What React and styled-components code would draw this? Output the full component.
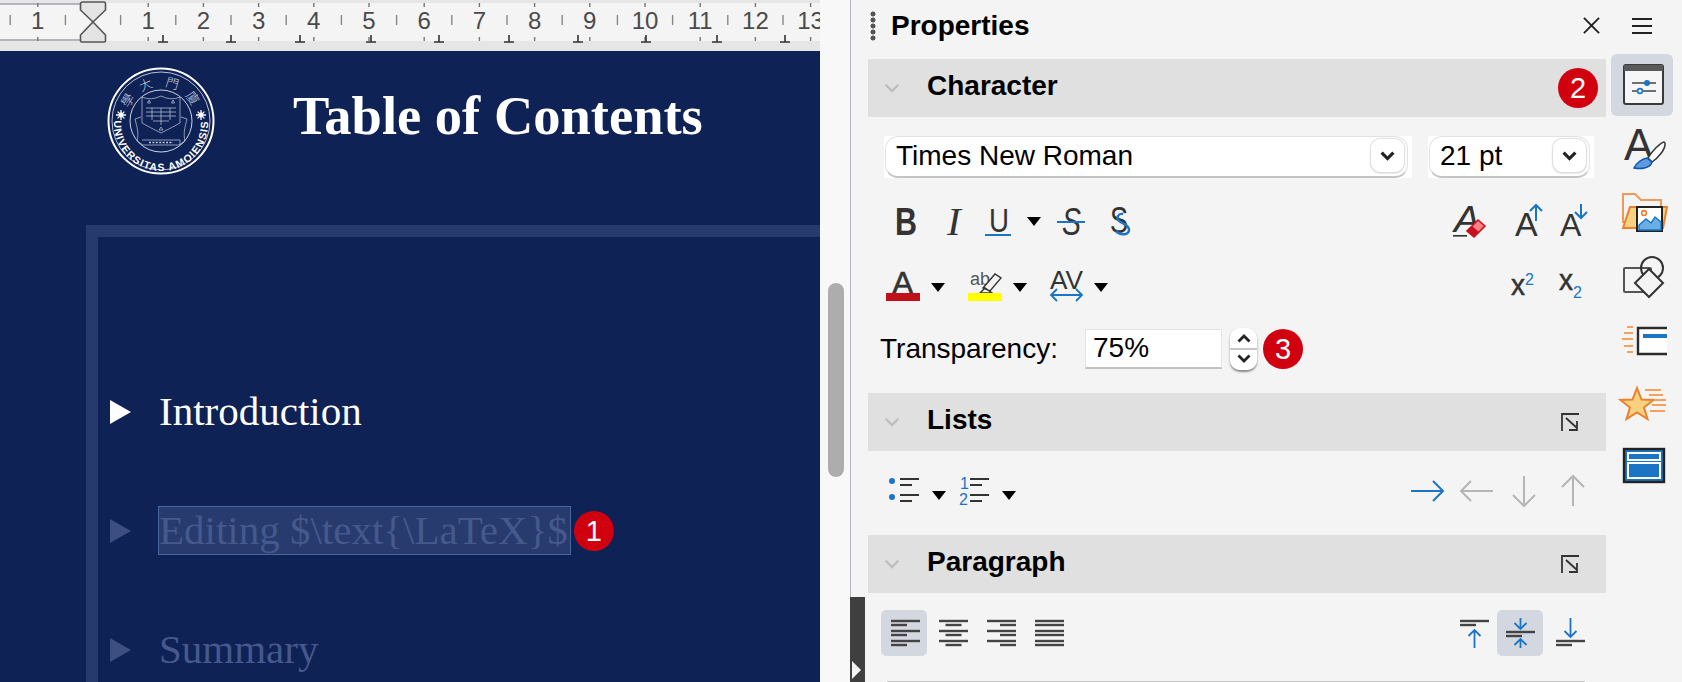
import React from "react";
import styled, { createGlobalStyle } from "styled-components";

const BLUE = "#1b75c4";
const DARK = "#333";
const ORANGE = "#ee7f2d";
const SANS = '"Liberation Sans", Arial, sans-serif';

const GlobalStyle = createGlobalStyle`
  html, body {
    margin: 0;
    padding: 0;
    overflow: hidden;
    background: #f4f4f4;
  }
  * {
    box-sizing: border-box;
  }
`;

const Page = styled.div`
  display: flex;
  width: 1682px;
  height: 682px;
  overflow: hidden;
  font-family: ${SANS};
  color: #000;
`;

/* left side: ruler, slide, scrollbar */
const Editor = styled.div`
  position: relative;
  display: flex;
  width: 851px;
  flex: none;
`;

const Workspace = styled.div`
  display: flex;
  flex-direction: column;
  width: 820px;
`;

const RulerBar = styled.div`
  height: 51px;
  flex: none;
  background: #f4f4f4;
  border-top: 3px solid #e6e6e6;
  border-bottom: 10px solid #e6e6e6;
  svg {
    display: block;
    margin-top: -3px;
  }
`;

const Slide = styled.div`
  flex: 1;
  overflow: hidden;
  background: #0f2255;
  font-family: "Liberation Serif", "Times New Roman", serif;
`;

const SlideHead = styled.div`
  display: flex;
  align-items: flex-start;
  height: 174px;
  padding: 16px 0 0 107px;
`;

const Title = styled.h1`
  margin: 18px 0 0 78px;
  font-size: 54.5px;
  line-height: 62px;
  font-weight: 700;
  color: #fff;
  white-space: nowrap;
`;

const Frame = styled.div`
  margin-left: 86px;
  height: 470px;
  padding: 150px 0 0 12px;
  border-left: 12px solid #273a6e;
  border-top: 12px solid #273a6e;
  display: flex;
  flex-direction: column;
  gap: 70px;
`;

const Bullet = styled.div`
  display: flex;
  align-items: center;
  height: 49px;
  color: ${(p) => (p.$dim ? "#45598c" : "#fff")};
`;

const Arrowhead = styled.span`
  width: 0;
  height: 0;
  flex: none;
  margin-right: 27px;
  border-left: 21px solid ${(p) => (p.$dim ? "#3d4f80" : "#fff")};
  border-top: 12.5px solid transparent;
  border-bottom: 12.5px solid transparent;
`;

const BulletText = styled.span`
  display: block;
  height: 49px;
  padding: 0 2px 0 0;
  border: 1px solid ${(p) => (p.$selected ? "#4a669e" : "transparent")};
  background: ${(p) => (p.$selected ? "#283b6e" : "transparent")};
  font-size: 41px;
  line-height: 47px;
  white-space: nowrap;
`;

const Badge = styled.span`
  width: 40px;
  height: 40px;
  flex: none;
  border-radius: 50%;
  background: #d0000f;
  color: #fff;
  font-family: ${SANS};
  font-size: 29px;
  line-height: 40px;
  text-align: center;
  margin-left: ${(p) => p.$ml || 0}px;
`;

const ScrollTrack = styled.div`
  width: 31px;
  flex: none;
  background: #f8f8f8;
  border-right: 1px solid #b6b6be;
  padding: 283px 0 0 8px;
`;

const ScrollThumb = styled.div`
  width: 16px;
  height: 194px;
  border-radius: 8px;
  background: #adadad;
`;

const CollapseHandle = styled.div`
  position: absolute;
  left: 850px;
  top: 597px;
  width: 15px;
  height: 85px;
  background: #3f3f3f;
  &::after {
    content: "";
    position: absolute;
    left: 2px;
    top: 64px;
    border-left: 9px solid #f4f4f4;
    border-top: 9px solid transparent;
    border-bottom: 9px solid transparent;
  }
`;

/* right side: properties deck and tab bar */
const Panel = styled.div`
  display: flex;
  flex: 1;
  background: #f4f4f4;
`;

const Deck = styled.div`
  width: 755px;
  flex: none;
  padding-left: 17px;
  display: flex;
  flex-direction: column;
`;

const DeckTitle = styled.div`
  display: flex;
  align-items: center;
  height: 59px;
  padding: 0 6px 8px 2px;
`;

const Grip = styled.span`
  width: 6px;
  height: 30px;
  margin-right: 15px;
  flex: none;
  background: radial-gradient(circle, #555 0 2.2px, transparent 2.8px) 0 0 / 6px 6px;
`;

const DeckName = styled.span`
  flex: 1;
  font-size: 28px;
  font-weight: 700;
  line-height: 32px;
`;

const SectionHead = styled.div`
  display: flex;
  align-items: center;
  height: 58px;
  flex: none;
  background: #e0e0e0;
  padding: 0 8px 0 16px;
  margin-top: ${(p) => p.$mt || 0}px;
`;

const SectionName = styled.span`
  flex: 1;
  margin-left: 27px;
  font-size: 28px;
  font-weight: 700;
  line-height: 32px;
  padding-bottom: 5px;
`;

const LauncherGap = styled.span`
  width: 18px;
  flex: none;
`;

const Row = styled.div`
  display: flex;
  align-items: center;
  justify-content: ${(p) => (p.$start ? "flex-start" : "space-between")};
  height: ${(p) => p.$h}px;
  margin-top: ${(p) => p.$mt}px;
  padding-left: ${(p) => p.$pl || 0}px;
  padding-right: ${(p) => p.$pr || 0}px;
  flex: none;
`;

const Group = styled.div`
  display: flex;
  align-items: center;
`;

const ComboBacking = styled.div`
  width: ${(p) => p.$w}px;
  height: 42px;
  margin-left: ${(p) => p.$ml || 0}px;
  background: #fff;
  flex: none;
`;

const Combo = styled.div`
  display: flex;
  align-items: center;
  justify-content: space-between;
  height: 42px;
  width: ${(p) => p.$w}px;
  margin-left: 1px;
  padding: 0 3px 2px 10px;
  border-radius: 13px;
  border: 1px solid #e2e2e2;
  border-bottom: 2px solid #c4c4c4;
  font-size: 28px;
  line-height: 32px;
  white-space: nowrap;
`;

const ComboButton = styled.span`
  display: flex;
  align-items: center;
  justify-content: center;
  width: 33px;
  height: 33px;
  flex: none;
  background: #fff;
  border-radius: 9px;
  box-shadow: 0 0 1px 1px #dedede, 0 1px 2px #bbb;
`;

const Caret = styled.span`
  display: block;
  flex: none;
  width: 0;
  height: 0;
  margin-left: ${(p) => p.$ml || 0}px;
  margin-top: ${(p) => p.$mt || 0}px;
  border-top: 9px solid #000;
  border-left: 7px solid transparent;
  border-right: 7px solid transparent;
`;

const Icon = styled.svg`
  display: block;
  flex: none;
  margin-left: ${(p) => p.$ml || 0}px;
  overflow: visible;
  text {
    font-family: ${SANS};
  }
`;

const FieldLabel = styled.span`
  width: 188px;
  font-size: 28px;
  line-height: 32px;
  white-space: nowrap;
`;

const NumberField = styled.div`
  width: 137px;
  height: 40px;
  flex: none;
  padding-left: 7px;
  background: #fff;
  border: 1px solid #e4e4e4;
  border-bottom: 2px solid #c2c2c2;
  font-size: 28px;
  line-height: 35px;
  margin-left: ${(p) => p.$ml || 0}px;
`;

const Spinner = styled.div`
  width: 27px;
  height: 42px;
  flex: none;
  margin-left: 8px;
  display: flex;
  flex-direction: column;
  align-items: center;
  justify-content: space-between;
  padding: 6px 0 7px;
  background: linear-gradient(#fff 47%, #c8c8c8 47% 52%, #fff 52%);
  border-radius: 10px;
  box-shadow: 0 0 1px #bbb, 0 2px 2px #888;
`;

const Toggle = styled.div`
  display: flex;
  align-items: center;
  justify-content: center;
  width: 46px;
  height: 46px;
  flex: none;
  border-radius: 5px;
  margin-left: ${(p) => p.$ml || 0}px;
  background: ${(p) => (p.$on ? "#d3d7df" : "transparent")};
`;

const Rule = styled.div`
  height: 1px;
  margin: 25px 21px 0 19px;
  background: #c6c6c6;
  flex: none;
`;

const TabBar = styled.div`
  flex: 1;
  padding-left: 5px;
  display: flex;
  flex-direction: column;
  gap: 2px;
`;

const MenuSlot = styled.div`
  display: flex;
  align-items: center;
  justify-content: center;
  height: 52px;
  width: 62px;
`;

const Tab = styled.div`
  display: flex;
  align-items: center;
  justify-content: center;
  width: 62px;
  height: 62px;
  flex: none;
  border-radius: 6px;
  background: ${(p) => (p.$on ? "#d3d7df" : "transparent")};
`;

const SealSvg = styled.svg`
  display: block;
  flex: none;
`;

/* drawings */
const Logo = () => (
  <SealSvg width="108" height="108" viewBox="-54 -54 108 108">
    <defs>
      <path id="seal-arc" d="M -47 3 A 47 47 0 0 0 47 3" />
    </defs>
    <circle r="52.5" fill="none" stroke="#fff" strokeWidth="2" />
    <circle r="49" fill="none" stroke="#e4e8f1" strokeWidth="0.8" />
    <circle r="31" fill="none" stroke="#dfe4ef" strokeWidth="0.9" />
    <text fontFamily={SANS} fontSize="10.5" fontWeight="700" fill="#fff" letterSpacing="1.1">
      <textPath href="#seal-arc" startOffset="50%" textAnchor="middle">
        UNIVERSITAS AMOIENSIS
      </textPath>
    </text>
    {[
      ["學", -58],
      ["大", -23],
      ["門", 17],
      ["廈", 54],
    ].map(([ch, deg]) => (
      <text
        key={ch}
        transform={`rotate(${deg}) translate(0 -34.500)`}
        textAnchor="middle"
        fontFamily='"Noto Sans CJK TC", sans-serif'
        fontSize="13"
        fontWeight="300"
        fill="#c8d0e2"
      >
        {ch}
      </text>
    ))}
    {[-40, 40].map((x) => (
      <g key={x} transform={`translate(${x} -6)`} stroke="#fff" strokeWidth="1.3">
        <path d="M-5 0H5M0 -5V5M-3.4 -3.4L3.4 3.4M-3.4 3.4L3.4 -3.4" />
        <circle r="2.4" fill="#fff" stroke="none" />
      </g>
    ))}
    <g fill="none" stroke="#c3cbdf" strokeWidth="0.7">
      <path d="M-19 -24 Q-10 -20 0 -25 Q10 -20 19 -24 V2 Q12 6 0 12 Q-12 6 -19 2 Z" />
      <path d="M-15 -13H15M-15 -9H15M-15 -5H15M-9 -13V-1M0 -13V4M9 -13V-1M-8 0H8" />
      <path d="M-12 -21l1.500 3-3 0zM12 -21l1.500 3-3 0zM0 6l2 3h-4z" />
      <path d="M-26 -2 C-24 6 -22 12 -24 20 L-18 24 H18 L24 20 C22 12 24 6 26 -2 M-19 19 H19 V24 M-26 -2 l6 -2 M26 -2 l-6 -2" />
      <path d="M-12 21.5H12" strokeDasharray="2 1.4" strokeWidth="1.4" />
    </g>
  </SealSvg>
);

const RulerMarks = () => {
  const unit = 55.2;
  const zero = 93;
  const labels = [];
  for (let i = -1; i <= 13; i++) {
    if (i !== 0) labels.push({ i, x: zero + i * unit });
  }
  const halves = [];
  for (let i = -2; i <= 13; i++) halves.push(zero + (i + 0.5) * unit);
  const stops = [163, 231, 300, 371, 439, 509, 578, 646, 717, 785];
  return (
    <svg width="820" height="51" viewBox="0 0 820 51">
      <path d="M0 4H82M0 40H82" stroke="#b4b4ba" strokeWidth="2" />
      {labels.map(({ i, x }) => (
        <g key={i}>
          <text x={x} y="29" textAnchor="middle" fontFamily={SANS} fontSize="24" fill="#4a4a4a">
            {Math.abs(i)}
          </text>
          <path d={`M${x} 3V7M${x} 37V41`} stroke="#777" strokeWidth="1.4" />
        </g>
      ))}
      {halves.map((x) => (
        <path key={x} d={`M${x} 15V25`} stroke="#888" strokeWidth="1.4" />
      ))}
      {stops.map((x) => (
        <path key={x} d={`M${x} 35V42M${x - 5} 42H${x + 5}`} stroke="#333" strokeWidth="1.6" fill="none" />
      ))}
      <path
        d="M83 2H104Q105.5 2 105.5 4V10L93 22L80.5 10V4Q80.5 2 83 2ZM93 22L105.5 35V41Q105.5 42 104 42H82Q80.5 42 80.5 41V35Z"
        fill="#e4e4e4"
        stroke="#555"
        strokeWidth="1.6"
      />
    </svg>
  );
};

const Chevron = ({ dir = "down", size = 15, color = "#222", sw = 3 }) => (
  <Icon width={size} height={size * 0.65} viewBox="0 0 14 9">
    <path
      d={dir === "down" ? "M1.5 1.5L7 7L12.5 1.5" : "M1.5 7.5L7 2L12.5 7.5"}
      fill="none"
      stroke={color}
      strokeWidth={sw}
    />
  </Icon>
);

const Launcher = () => (
  <Icon width="20" height="20" viewBox="0 0 20 20">
    <path d="M2 19V2H19M6 6L17 16M17 9V18H9" fill="none" stroke={DARK} strokeWidth="1.8" />
  </Icon>
);

const Lines = ({ kind }) => {
  const ys = [3, 7, 13, 17, 23, 27];
  return (
    <Icon width="29" height="30" viewBox="0 0 29 30" $ml={3}>
      {ys.map((y, n) => {
        const short = kind !== "justify" && n % 2 === 1;
        const w = short ? 16 : 29;
        const x = kind === "center" ? (29 - w) / 2 : kind === "right" ? 29 - w : 0;
        return <rect key={y} x={x} y={y - 1.2} width={w} height="2.4" fill="#444" />;
      })}
    </Icon>
  );
};

const arrowPath = (x, y1, y2) => {
  const d = y2 > y1 ? -1 : 1;
  return `M${x} ${y1}V${y2}M${x - 6} ${y2 + d * 6}L${x} ${y2}L${x + 6} ${y2 + d * 6}`;
};

const VAlign = ({ kind }) => {
  const bars =
    kind === "top"
      ? [[0, 29, 4], [0, 16, 8]]
      : kind === "mid"
      ? [[0, 29, 15], [0, 16, 19]]
      : [[0, 29, 24], [0, 16, 28]];
  return (
    <Icon width="29" height="32" viewBox="0 0 29 32">
      {bars.map(([x, w, y]) => (
        <rect key={y} x={x} y={y - 1.2} width={w} height="2.4" fill="#444" />
      ))}
      <g fill="none" stroke={BLUE} strokeWidth="1.8">
        {kind === "top" && <path d={arrowPath(14.5, 31, 13)} />}
        {kind === "mid" && <path d={arrowPath(14.5, 1, 12) + arrowPath(14.5, 31, 22)} />}
        {kind === "bottom" && <path d={arrowPath(14.5, 1, 20)} />}
      </g>
    </Icon>
  );
};

const Nav = ({ d, color, w = 34, ml }) => (
  <Icon width={w} height="32" viewBox={`0 0 ${w} 32`} $ml={ml}>
    <path d={d} fill="none" stroke={color} strokeWidth="2" />
  </Icon>
);

const ListLines = () => (
  <path d="M11 3H30M11 9H23M11 19H30M11 25H23" stroke={DARK} strokeWidth="2.2" fill="none" />
);

export default function App() {
  return (
    <Page>
      <GlobalStyle />
      <Editor>
        <Workspace>
          <RulerBar>
            <RulerMarks />
          </RulerBar>
          <Slide>
            <SlideHead>
              <Logo />
              <Title>Table of Contents</Title>
            </SlideHead>
            <Frame>
              <Bullet>
                <Arrowhead />
                <BulletText>Introduction</BulletText>
              </Bullet>
              <Bullet $dim>
                <Arrowhead $dim />
                <BulletText $selected>Editing $\text{"{"}\LaTeX{"}"}$</BulletText>
                <Badge $ml={3}>1</Badge>
              </Bullet>
              <Bullet $dim>
                <Arrowhead $dim />
                <BulletText>Summary</BulletText>
              </Bullet>
            </Frame>
          </Slide>
        </Workspace>
        <ScrollTrack>
          <ScrollThumb />
        </ScrollTrack>
        <CollapseHandle />
      </Editor>

      <Panel>
        <Deck>
          <DeckTitle>
            <Grip />
            <DeckName>Properties</DeckName>
            <Icon width="17" height="17" viewBox="0 0 18 18">
              <path d="M1 1L17 17M17 1L1 17" stroke="#222" strokeWidth="2" />
            </Icon>
          </DeckTitle>

          <SectionHead>
            <Chevron color="#bdbdbd" size={16} sw={2} />
            <SectionName>Character</SectionName>
            <Badge>2</Badge>
          </SectionHead>

          <Row $h={42} $mt={19} $pl={16} $start>
            <ComboBacking $w={528}>
              <Combo $w={523}>
                Times New Roman
                <ComboButton>
                  <Chevron />
                </ComboButton>
              </Combo>
            </ComboBacking>
            <ComboBacking $w={166} $ml={16}>
              <Combo $w={161}>
                21 pt
                <ComboButton>
                  <Chevron />
                </ComboButton>
              </Combo>
            </ComboBacking>
          </Row>

          <Row $h={32} $mt={27} $pl={27} $pr={18}>
            <Group>
              <Icon width="22" height="32" viewBox="0 0 22 32">
                <text x="0" y="30" fontSize="39" fontWeight="700" fill={DARK} textLength="22" lengthAdjust="spacingAndGlyphs">B</text>
              </Icon>
              <Icon width="14" height="32" viewBox="0 0 14 32" $ml={30}>
                <text x="0" y="30" fontSize="41" fontStyle="italic" fill={DARK} style={{ fontFamily: '"Liberation Serif", serif' }}>I</text>
              </Icon>
              <Icon width="26" height="32" viewBox="0 0 26 32" $ml={24}>
                <text x="4" y="27" fontSize="33" fill={DARK} textLength="20" lengthAdjust="spacingAndGlyphs">U</text>
                <rect x="0" y="29" width="26" height="2" fill={BLUE} />
              </Icon>
              <Caret $ml={16} />
              <Icon width="28" height="32" viewBox="0 0 28 32" $ml={16}>
                <text x="5" y="30" fontSize="38" fontStyle="italic" fill={DARK} textLength="19" lengthAdjust="spacingAndGlyphs">S</text>
                <rect x="0" y="16" width="28" height="2" fill={BLUE} />
              </Icon>
              <Icon width="22" height="34" viewBox="0 0 22 34" $ml={25}>
                <text x="0" y="29" fontSize="36" fill={DARK} textLength="18" lengthAdjust="spacingAndGlyphs">S</text>
                <path d="M13 10C8 9 6 14 9 17C12 20 19 20 19 26C19 31 10 32 6 27" fill="none" stroke={BLUE} strokeWidth="2.4" />
              </Icon>
            </Group>
            <Group>
              <Icon width="34" height="34" viewBox="0 0 34 34">
                <text x="1" y="28" fontSize="36" fontStyle="italic" fill={DARK} textLength="26" lengthAdjust="spacingAndGlyphs">A</text>
                <rect x="0" y="31" width="14" height="1.6" fill={DARK} />
                <path d="M14 27L25 16L32 22L21 33Z" fill="#ff8088" stroke="#c8101c" strokeWidth="1.6" />
                <path d="M14 27L19 22L26 28L21 33Z" fill="#c8101c" />
              </Icon>
              <Icon width="28" height="34" viewBox="0 0 28 34" $ml={28}>
                <text x="0" y="32" fontSize="34" fill={DARK}>A</text>
                <path d="M21 17V1M15 7L21 1L27 7" fill="none" stroke={BLUE} strokeWidth="2" />
              </Icon>
              <Icon width="28" height="34" viewBox="0 0 28 34" $ml={17}>
                <text x="0" y="32" fontSize="32" fill={DARK}>A</text>
                <path d="M21 0V13M15 8L21 14L27 8" fill="none" stroke={BLUE} strokeWidth="2" />
              </Icon>
            </Group>
          </Row>

          <Row $h={32} $mt={32} $pl={18} $pr={23}>
            <Group>
              <Icon width="34" height="32" viewBox="0 0 34 32">
                <text x="6" y="25" fontSize="32" fill={DARK} stroke={DARK} strokeWidth="0.6">A</text>
                <rect x="0" y="24" width="34" height="8" fill="#c0101c" />
              </Icon>
              <Caret $ml={11} $mt={4} />
              <Icon width="34" height="32" viewBox="0 0 34 32" $ml={23}>
                <text x="2" y="16" fontSize="18" fill="#555">ab</text>
                <path d="M15 19L27 5L33 9L22 22ZM12 24L24 24L17 19Z" fill="#f4f4f4" stroke={DARK} strokeWidth="1.4" />
                <rect x="0" y="24" width="34" height="8" fill="#ffff00" />
              </Icon>
              <Caret $ml={11} $mt={4} />
              <Icon width="34" height="32" viewBox="0 0 34 32" $ml={23}>
                <text x="0" y="20" fontSize="25" fill={DARK} textLength="33" lengthAdjust="spacingAndGlyphs">AV</text>
                <path d="M1 26H32M7 20L1 26L7 32M26 20L32 26L26 32" fill="none" stroke={BLUE} strokeWidth="1.8" />
              </Icon>
              <Caret $ml={10} $mt={4} />
            </Group>
            <Group>
              <Icon width="24" height="24" viewBox="0 0 24 24">
                <text x="0" y="22" fontSize="30" fill={DARK} stroke={DARK} strokeWidth="0.5" textLength="14" lengthAdjust="spacingAndGlyphs">x</text>
                <text x="14" y="12" fontSize="16" fill={BLUE}>2</text>
              </Icon>
              <Icon width="24" height="26" viewBox="0 0 24 26" $ml={24}>
                <text x="0" y="18" fontSize="30" fill={DARK} stroke={DARK} strokeWidth="0.5" textLength="14" lengthAdjust="spacingAndGlyphs">x</text>
                <text x="14" y="26" fontSize="16" fill={BLUE}>2</text>
              </Icon>
            </Group>
          </Row>

          <Row $h={42} $mt={27} $pl={12} $start>
            <FieldLabel>Transparency:</FieldLabel>
            <NumberField $ml={17}>75%</NumberField>
            <Spinner>
              <Chevron dir="up" size={14} sw={2.8} />
              <Chevron size={14} sw={2.8} />
            </Spinner>
            <Badge $ml={6}>3</Badge>
          </Row>

          <SectionHead $mt={23}>
            <Chevron color="#bdbdbd" size={16} sw={2} />
            <SectionName>Lists</SectionName>
            <Launcher />
            <LauncherGap />
          </SectionHead>

          <Row $h={32} $mt={24} $pl={21} $pr={21}>
            <Group>
              <Icon width="30" height="30" viewBox="0 0 30 30">
                <circle cx="3" cy="5" r="3" fill={BLUE} />
                <circle cx="3" cy="21" r="3" fill={BLUE} />
                <ListLines />
              </Icon>
              <Caret $ml={13} $mt={8} />
              <Icon width="30" height="30" viewBox="0 0 30 30" $ml={13}>
                <text x="1" y="13" fontSize="16" fill={BLUE}>1</text>
                <text x="0" y="29" fontSize="16" fill={BLUE}>2</text>
                <ListLines />
              </Icon>
              <Caret $ml={13} $mt={8} />
            </Group>
            <Group>
              <Nav color={BLUE} d="M0 16H32M22 6L32 16L22 26" />
              <Nav color="#b5b5b5" ml={14} d="M34 16H2M12 6L2 16L12 26" />
              <Nav color="#b5b5b5" w={24} ml={19} d="M12 1V31M1 20L12 31L23 20" />
              <Nav color="#b5b5b5" w={24} ml={25} d="M12 31V1M1 12L12 1L23 12" />
            </Group>
          </Row>

          <SectionHead $mt={28}>
            <Chevron color="#bdbdbd" size={16} sw={2} />
            <SectionName>Paragraph</SectionName>
            <Launcher />
            <LauncherGap />
          </SectionHead>

          <Row $h={46} $mt={17} $pl={13} $pr={13}>
            <Group>
              <Toggle $on>
                <Lines kind="left" />
              </Toggle>
              <Toggle $ml={2}>
                <Lines kind="center" />
              </Toggle>
              <Toggle $ml={2}>
                <Lines kind="right" />
              </Toggle>
              <Toggle $ml={2}>
                <Lines kind="justify" />
              </Toggle>
            </Group>
            <Group>
              <Toggle>
                <VAlign kind="top" />
              </Toggle>
              <Toggle $on>
                <VAlign kind="mid" />
              </Toggle>
              <Toggle $ml={4}>
                <VAlign kind="bottom" />
              </Toggle>
            </Group>
          </Row>
          <Rule />
        </Deck>

        <TabBar>
          <MenuSlot>
            <Icon width="20" height="16" viewBox="0 0 20 16">
              <path d="M0 1H20M0 8H20M0 15H20" stroke="#222" strokeWidth="2" />
            </Icon>
          </MenuSlot>
          <Tab $on>
            <Icon width="52" height="48" viewBox="0 0 52 48">
              <rect x="8" y="4" width="39" height="39" rx="2" fill="#f6f6f6" stroke="#3a3a3a" strokeWidth="2" />
              <rect x="8" y="4" width="39" height="6" fill="#5a5a5a" />
              <path d="M16 22H40M16 30H40" stroke="#444" strokeWidth="1.6" />
              <circle cx="31" cy="22" r="3" fill={BLUE} />
              <circle cx="24" cy="30" r="2.4" fill="#f6f6f6" stroke={BLUE} strokeWidth="1.6" />
            </Icon>
          </Tab>
          <Tab>
            <Icon width="52" height="48" viewBox="0 0 52 48">
              <text x="8" y="35" fontSize="44" fill={DARK}>A</text>
              <path d="M48 17C44 18 36 26 32 33L36 37C42 33 50 24 49 18Z" fill="#fff" stroke={DARK} strokeWidth="1.5" />
              <path d="M31 33C26 34 20 38 18 43C24 44 34 44 36 37Z" fill="#5b9be0" stroke="#1254a8" strokeWidth="1.5" />
            </Icon>
          </Tab>
          <Tab>
            <Icon width="52" height="48" viewBox="0 0 52 48">
              <path d="M7 34V5H19L25 11H45V18" fill="none" stroke="#ef9a55" strokeWidth="2" />
              <path d="M7 39L14 18H51L47 39Z" fill="#f8d27f" stroke={ORANGE} strokeWidth="2" />
              <rect x="21" y="18" width="25" height="24" fill="#fff" stroke="#222" strokeWidth="2" />
              <circle cx="28" cy="24" r="2.4" fill="#fff" stroke={ORANGE} strokeWidth="1.6" />
              <path d="M23 41V36L30 30L35 34L39 28L45 33V41Z" fill="#6aaee6" stroke={BLUE} strokeWidth="1.4" />
            </Icon>
          </Tab>
          <Tab>
            <Icon width="52" height="48" viewBox="0 0 52 48">
              <rect x="8" y="15" width="27" height="24" rx="1" fill="none" stroke="#555" strokeWidth="2" />
              <circle cx="36" cy="15" r="11" fill="none" stroke="#333" strokeWidth="2" />
              <path d="M33 16L47 30L33 44L19 30Z" fill="#f4f4f4" stroke="#333" strokeWidth="2" />
            </Icon>
          </Tab>
          <Tab>
            <Icon width="52" height="48" viewBox="0 0 52 48">
              <path d="M51 11H22V37H51" fill="#fff" stroke="#2b2b2b" strokeWidth="2.4" />
              <rect x="27" y="17" width="24" height="4" fill={BLUE} />
              <path d="M11 10H17M8 16H17M6 22H17M8 29H17M11 35H17" stroke="#f5a15c" strokeWidth="2" />
            </Icon>
          </Tab>
          <Tab>
            <Icon width="52" height="48" viewBox="0 0 52 48">
              <path d="M21 7L25.500 18.500L37.500 19L28 26.500L31.500 38L21 31.500L10.500 38L14 26.500L4.500 19L16.500 18.500Z" fill="#f8d27f" stroke={ORANGE} strokeWidth="2" />
              <path d="M29 9H45M33 14H47M38 19H50M36 24H50M34 30H49" stroke="#f5a15c" strokeWidth="2" />
            </Icon>
          </Tab>
          <Tab>
            <Icon width="52" height="48" viewBox="0 0 52 48">
              <rect x="8" y="4" width="40" height="33" fill={BLUE} stroke="#222" strokeWidth="2.4" />
              <rect x="12" y="8" width="32" height="7" fill={BLUE} stroke="#fff" strokeWidth="2" />
              <rect x="12" y="18" width="32" height="15" fill={BLUE} stroke="#fff" strokeWidth="2" />
            </Icon>
          </Tab>
        </TabBar>
      </Panel>
    </Page>
  );
}
